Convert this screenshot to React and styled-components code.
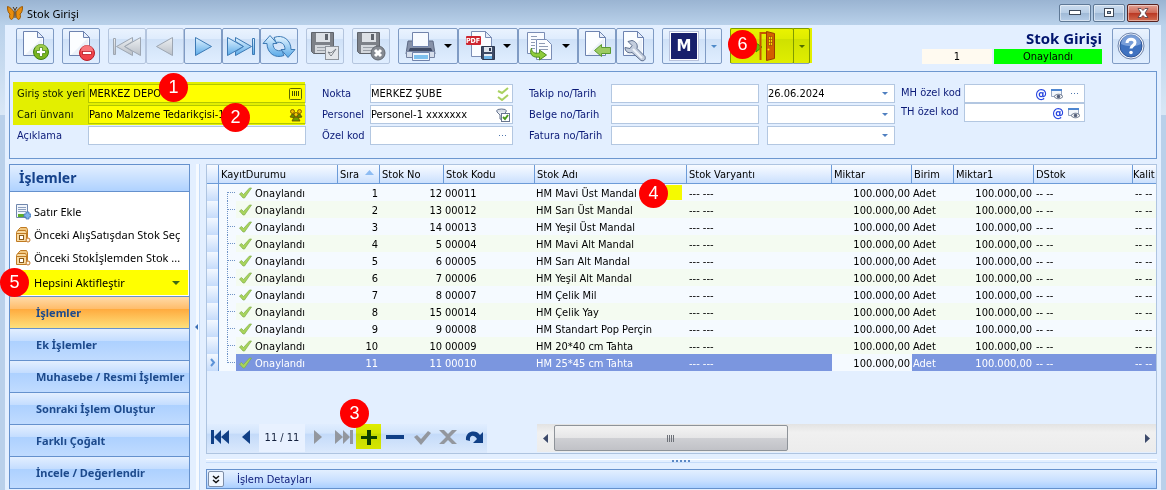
import React, { useId, useState } from 'react';
import styled, { createGlobalStyle, css } from 'styled-components';

const GlobalStyle = createGlobalStyle`
  * {
    box-sizing: border-box;
  }
  html, body, #root {
    height: 100%;
  }
  body {
    margin: 0;
    overflow: hidden;
    font-family: 'DejaVu Sans Condensed', Tahoma, sans-serif;
    font-size: 11px;
    color: #000;
  }
  button, input {
    font: inherit;
    color: inherit;
  }
`;

const Frame = styled.div`
  display: flex;
  flex-direction: column;
  height: 100vh;
  padding: 0 5px;
  background: linear-gradient(#b9d1ea 0, #b9d1ea 25px, #d9e7f6 115px, #b9d0ea 115px);
`;

const TitleBar = styled.header`
  display: flex;
  align-items: center;
  gap: 4px;
  height: 25px;
  flex: none;
  margin: 0 -5px;
  padding: 0 7px;
  background: linear-gradient(#9ab4d2, #b9d1ea);
`;

const WindowTitle = styled.span`
  flex: 1;
  font-family: 'Noto Sans', sans-serif;
  font-size: 11px;
  line-height: 25px;
  padding-top: 2px;
`;

const WindowButtons = styled.div`
  display: flex;
  gap: 2px;
`;

const WindowButton = styled.button`
  display: flex;
  align-items: center;
  justify-content: center;
  width: 32px;
  height: 18px;
  padding: 0;
  border: 1px solid ${(props) => (props.$close ? '#57221f' : '#5f7996')};
  border-radius: 2px;
  background: ${(props) =>
    props.$close
      ? 'linear-gradient(#e2a295, #cf6a57 48%, #b93622 50%, #d26c50)'
      : 'linear-gradient(#cbdcee, #b8cee6 48%, #9fb9d6 50%, #b7cee8)'};
  box-shadow: inset 0 0 0 1px rgba(255, 255, 255, 0.45);
`;

const Body = styled.main`
  display: flex;
  flex-direction: column;
  flex: 1;
  min-height: 0;
  padding: 3px 4px 0;
  background: #e3efff;
`;

const Toolbar = styled.div`
  display: flex;
  gap: 8px;
  height: 36px;
  flex: none;
  padding: 0 7px;
`;

const ButtonGroup = styled.div`
  position: relative;
  display: flex;
`;

const ToolButton = styled.button`
  display: flex;
  align-items: center;
  justify-content: center;
  gap: 8px;
  width: ${(props) => props.$width || 38}px;
  height: 36px;
  padding: 0;
  border: 1px solid #7f9bc4;
  border-radius: 2px;
  background: linear-gradient(#eaf3fe, #dfecfd 28%, #cfe1f7 30%, #e0eeff);
  &:disabled {
    border-color: #b4c5de;
  }
`;

const CaretButton = styled(ToolButton)`
  width: ${(props) => props.$width || 17}px;
  margin-left: -1px;
  border-radius: 0 2px 2px 0;
`;

const DocumentInfo = styled.div`
  display: grid;
  grid-template-columns: 70px 108px;
  grid-template-rows: 21px 15px;
  column-gap: 2px;
  margin-left: auto;
  margin-right: 2px;
  text-align: center;
`;

const DocumentTitle = styled.h1`
  grid-column: 1 / 3;
  margin: 0;
  text-align: right;
  font-family: 'Open Sans', sans-serif;
  font-size: 15px;
  line-height: 21px;
  font-weight: 700;
  color: #00146e;
`;

const InfoCell = styled.span`
  line-height: 16px;
  background: ${(props) => props.$color};
`;

const FormPanel = styled.section`
  display: flex;
  align-items: flex-start;
  flex: none;
  height: 88px;
  margin-top: 7px;
  padding: 12px 8px 0 7px;
  border: 1px solid #6d97cf;
`;

const FieldGroup = styled.div`
  position: relative;
  display: grid;
  grid-template-columns: ${(props) => props.$columns};
  grid-auto-rows: 19px;
  row-gap: ${(props) => (props.$dense ? 0 : 2)}px;
  margin-right: ${(props) => props.$space || 0}px;
  line-height: ${(props) => (props.$dense ? 18 : 20)}px;
`;

const Label = styled.label`
  white-space: nowrap;
  color: #0b1a78;
`;

const FieldBox = styled.span`
  display: flex;
  align-items: center;
  min-width: 0;
  margin-right: ${(props) => props.$space || 0}px;
  padding-right: 1px;
  border: 1px solid #b3c7e1;
  background: #fff;
`;

const TextInput = styled.input`
  flex: 1;
  min-width: 0;
  height: 17px;
  padding: 0;
  border: 0;
  outline: 0;
  background: transparent;
  line-height: 17px;
`;

const IconButton = styled.button`
  display: flex;
  align-items: center;
  justify-content: center;
  width: ${(props) => props.$width || 17}px;
  height: 16px;
  padding: 0;
  border: 0;
  background: none;
  color: #4f76ad;
`;

// yellow marker pen laid over a part of the screen
const Marker = styled.span`
  position: absolute;
  z-index: 1;
  inset: ${(props) => props.$inset || '0'};
  background: #ff0;
  mix-blend-mode: multiply;
  pointer-events: none;
`;

const Badge = styled.span`
  position: absolute;
  z-index: 2;
  left: ${(props) => props.$left}px;
  top: ${(props) => props.$top}px;
  width: 29px;
  height: 29px;
  border-radius: 50%;
  background: #fe0000;
  color: #fff;
  font-family: 'Liberation Sans', sans-serif;
  font-size: 18px;
  line-height: 29px;
  text-align: center;
  pointer-events: none;
`;

const Work = styled.div`
  display: flex;
  flex: 1;
  min-height: 0;
  margin-top: 5px;
`;

const Sidebar = styled.aside`
  display: flex;
  flex-direction: column;
  width: 181px;
  flex: none;
  margin-bottom: 1px;
  border: 1px solid #6591cd;
  background: #fff;
  font-family: 'Noto Sans', sans-serif;
`;

const SidebarTitle = styled.h2`
  height: 27px;
  margin: 0 0 8px;
  padding-left: 9px;
  border-bottom: 1px solid #6591cd;
  background: linear-gradient(#e3efff, #afd2ff);
  color: #15428b;
  font-size: 14px;
  line-height: 26px;
  font-weight: 700;
`;

const Action = styled.button`
  display: flex;
  align-items: center;
  gap: 3px;
  height: 23px;
  padding: 0 5px;
  border: 0;
  background: none;
  line-height: 23px;
  text-align: left;
  white-space: nowrap;
  svg {
    flex: none;
  }
`;

const ActivateRow = styled.div`
  position: relative;
  height: 27px;
  padding: 1px 0;
`;

const ActivateButton = styled.button`
  display: flex;
  align-items: center;
  justify-content: space-between;
  width: calc(100% - 1px);
  height: 25px;
  padding: 0 8px 0 24px;
  border: 0;
  background: #ff0;
`;

const Divider = styled.hr`
  width: 146px;
  height: 1px;
  margin: 0 0 0 25px;
  border: 0;
  background: #6f93c9;
`;

const NavButton = styled.button`
  height: 32px;
  flex: none;
  padding: 0 0 0 26px;
  border: 0;
  border-top: 1px solid #6591cd;
  color: #1d4a8c;
  font-weight: 700;
  line-height: 31px;
  text-align: left;
  white-space: nowrap;
  background: ${(props) =>
    props.$active
      ? 'linear-gradient(#ffdaa8, #ffbd6b 38%, #ffab3f 40%, #fee07b)'
      : 'linear-gradient(#e3efff, #c4ddff 38%, #add1ff 40%, #c0dbff)'};
`;

const SideSplitter = styled.div`
  display: flex;
  align-items: center;
  justify-content: flex-end;
  width: 10px;
  margin-right: 6px;
  flex: none;
  border-right: 1px solid #c4dbf9;
  box-shadow: inset -3px 0 #f6faff;
`;

const GridArea = styled.div`
  display: flex;
  flex-direction: column;
  flex: 1;
  min-width: 0;
  margin-bottom: 1px;
`;

const GridBox = styled.section`
  display: flex;
  flex-direction: column;
  flex: 1;
  min-height: 0;
  border: 1px solid #aec4e0;
`;

const TableArea = styled.div`
  flex: 1;
  min-height: 0;
  overflow: hidden;
`;

const Table = styled.table`
  width: 100%;
  table-layout: fixed;
  border-collapse: separate;
  border-spacing: 0;
`;

const Th = styled.th`
  height: 19px;
  padding: 2px 0 0 2px;
  border-right: 1px solid #6c9bd8;
  border-bottom: 1px solid #6c9bd8;
  background: linear-gradient(#f8fbff, #e2eeff 50%, #cbe0fd);
  font-weight: 400;
  line-height: 16px;
  text-align: left;
  white-space: nowrap;
  &:last-child {
    padding-left: 0;
    border-right: 0;
  }
`;

const SortArrow = styled.svg`
  margin: 0 0 3px 6px;
`;

const Row = styled.tr`
  background: ${(props) => (props.$odd ? '#f5faff' : '#f4fbf1')};
  ${(props) =>
    props.$selected &&
    css`
      background: #7b96df;
      color: #fff;
    `}
`;

const Td = styled.td`
  position: relative;
  height: 17px;
  padding: 2px 2px 0 1px;
  line-height: 15px;
  text-align: ${(props) => (props.$right ? 'right' : 'left')};
  white-space: nowrap;
  ${(props) =>
    props.$editing &&
    css`
      background: #f5faff;
      color: #000;
    `}
`;

const DashCell = styled(Td)`
  padding-left: 2px;
`;

const StatusTd = styled(Td)`
  padding: 0;
`;

const Indicator = styled.td`
  height: 17px;
  padding: 0;
  border-right: 1px solid #6c9bd8;
  background: linear-gradient(#f3f8ff, #c6dcfb);
  line-height: 0;
  text-align: center;
`;

const StatusCell = styled.div`
  display: flex;
  align-items: center;
  height: 17px;
  gap: 3px;
`;

const StatusText = styled.span`
  padding-top: 2px;
`;

const Tree = styled.svg`
  flex: none;
  background: #f5faff;
`;

const Footer = styled.div`
  display: flex;
  height: 29px;
  flex: none;
`;

const Navigator = styled.div`
  position: relative;
  display: flex;
  align-items: flex-start;
  width: 280px;
  flex: none;
  background: linear-gradient(#e0edff, #d3e5fc 32%, #c3daf9 34%, #dbe9fc);
`;

const NavIcon = styled.button`
  display: flex;
  align-items: center;
  justify-content: center;
  width: ${(props) => props.$width || 26}px;
  height: 26px;
  padding: 0;
  border: 0;
  background: none;
  color: #103f86;
  &:disabled {
    color: #93979e;
  }
`;

const Position = styled.span`
  width: 46px;
  line-height: 28px;
  background: #e8f1ff;
  text-align: center;
  color: #14213d;
`;

const ScrollBar = styled.div`
  display: flex;
  align-items: center;
  flex: 1;
  min-width: 0;
  height: 28px;
  margin-left: 50px;
  background: linear-gradient(#e3e3e3, #f0f0f0 30%, #ececec);
`;

const ScrollArrow = styled.button`
  display: flex;
  align-items: center;
  justify-content: center;
  width: 17px;
  height: 26px;
  padding: 0;
  border: 0;
  background: none;
`;

const ScrollTrack = styled.div`
  flex: 1;
`;

const ScrollThumb = styled.div`
  display: flex;
  align-items: center;
  justify-content: center;
  width: 40%;
  height: 26px;
  border: 1px solid #8e9399;
  border-radius: 2px;
  background: linear-gradient(#f4f4f4, #e6e6e7 48%, #cfd0d4 50%, #c1c2c7);
`;

const BottomSplitter = styled.div`
  display: flex;
  align-items: center;
  justify-content: center;
  height: 4px;
  flex: none;
  margin: 5px 0 6px;
  border-top: 1px solid #fff;
  border-bottom: 1px solid #c4dbf9;
`;

const DetailBar = styled.section`
  display: flex;
  align-items: center;
  gap: 13px;
  height: 20px;
  flex: none;
  padding: 0 1px;
  border: 1px solid #6591cd;
  background: linear-gradient(#e3efff, #c8dfff 60%, #a9cfff);
  color: #0b1a78;
`;

const ExpandButton = styled.button`
  display: flex;
  align-items: center;
  justify-content: center;
  width: 16px;
  height: 16px;
  padding: 0;
  border: 1px solid #7d8ea8;
  border-radius: 2px;
  background: #f1f7ff;
`;

function Caret({ color = '#000', size = 8 }) {
  return (
    <svg width={size} height={size / 2} viewBox="0 0 8 4">
      <path d="M0 0h8L4 4z" fill={color} />
    </svg>
  );
}

function Page({ children }) {
  return (
    <svg width="30" height="32" viewBox="0 0 30 32">
      <path d="M3.5 1.5h14l6 6v18h-20z" fill="#fbfdff" stroke="#6d83b0" />
      <path d="M5 25l17-17v17z" fill="#e4ebf6" opacity=".7" />
      <path d="M17.500 1.5v6h6z" fill="#e7eefa" stroke="#6d83b0" />
      {children}
    </svg>
  );
}

function AddPageIcon() {
  return (
    <Page>
      <circle cx="21" cy="22" r="7.5" fill="#79b51c" stroke="#3f7f12" />
      <path d="M15 20a6 6 0 0 1 12 0c-4 2-8 2-12 0z" fill="#b9dc6a" opacity=".6" />
      <path d="M19.5 17.5h3v3h3v3h-3v3h-3v-3h-3v-3h3z" fill="#fff" stroke="#4c8a17" strokeWidth=".8" />
    </Page>
  );
}

function RemovePageIcon() {
  return (
    <Page>
      <circle cx="21" cy="23" r="7.5" fill="#f0444b" stroke="#b81d26" />
      <path d="M15 21a6 6 0 0 1 12 0c-4 2-8 2-12 0z" fill="#ff9a9d" opacity=".6" />
      <rect x="16.5" y="21.5" width="9" height="3" fill="#fff" stroke="#b81d26" strokeWidth=".8" />
    </Page>
  );
}

function ArrowDefs({ id, grey }) {
  return (
    <linearGradient id={id} x1="0" y1="0" x2="0" y2="1">
      <stop offset="0" stopColor={grey ? '#eceff2' : '#e2f3ff'} />
      <stop offset="1" stopColor={grey ? '#b9bfc7' : '#5aaae8'} />
    </linearGradient>
  );
}

function StepIcon({ grey, double, back }) {
  const id = useId();
  const paint = { fill: `url(#${id})`, stroke: grey ? '#9da6b2' : '#3d7ab5' };
  return (
    <svg width="32" height="26" viewBox="0 0 32 26">
      <ArrowDefs id={id} grey={grey} />
      <g transform={back ? 'matrix(-1 0 0 1 32 0)' : undefined}>
        {double ? (
          <>
            <path d="M2.5 4.5l16 9-16 9z" {...paint} />
            <path d="M10.5 4.5l16 9-16 9v-4l8-5-8-5z" {...paint} />
            <path d="M27.5 5.5h2v16h-2z" {...paint} />
          </>
        ) : (
          <path d="M8.5 4.500l16 9-16 9z" {...paint} />
        )}
      </g>
    </svg>
  );
}

function RefreshIcon() {
  const id = useId();
  return (
    <svg width="34" height="28" viewBox="0 0 34 28">
      <ArrowDefs id={id} />
      <g fill={`url(#${id})`} stroke="#3d7ab5" strokeLinejoin="round">
        <path d="M8 3.5l7 8h-4c0 6 4 8 9 7l2 5C13 27 5 21 5 11.5H1z" />
        <path d="M26 25.5l-7-8h4c0-6-4-8-9-7l-2-5C21 2 29 8 29 17.5h4z" />
      </g>
    </svg>
  );
}

function SaveIcon({ cancel }) {
  return (
    <svg width="30" height="30" viewBox="0 0 30 30">
      <path d="M1.5 1.5h22v21h-20l-2-2z" fill="#7d8188" stroke="#5f646c" />
      <rect x="6" y="2" width="14" height="9" fill="#dde1e6" />
      <rect x="15" y="3" width="3" height="6" fill="#5f646c" />
      <rect x="5" y="14" width="15" height="8" fill="#d4d8dd" />
      <path d="M7 16.5h11M7 19.5h11" stroke="#9aa0a8" />
      {cancel ? (
        <>
          <circle cx="22" cy="22" r="7" fill="#858a92" stroke="#62676f" />
          <path d="M19 19l6 6m0-6l-6 6" stroke="#fff" strokeWidth="3" />
        </>
      ) : (
        <>
          <rect x="15.5" y="15.5" width="13" height="13" fill="#e3e6ea" stroke="#8d939b" />
          <path d="M18 21l3 4 5-7-5 4z" fill="#fff" stroke="#777d85" />
        </>
      )}
    </svg>
  );
}

function PrintIcon() {
  return (
    <svg width="31" height="31" viewBox="0 0 31 31">
      <path d="M3 10h25l2 13H1z" fill="#8691a8" stroke="#5d6983" />
      <path d="M5 17h21l2 4H3z" fill="#3f4a64" />
      <path d="M7.5 1.5h16v14h-16z" fill="#f7faff" stroke="#7183ab" />
      <path d="M1.5 20.5h28v6h-28z" fill="#d7dfec" stroke="#7684a2" />
      <path d="M7.5 21.5h17v8h-17z" fill="#eef5fd" stroke="#7183ab" />
      <path d="M9 24h14v4H9z" fill="#7dc0ee" />
    </svg>
  );
}

function PdfIcon() {
  return (
    <svg width="30" height="32" viewBox="0 0 30 32">
      <path d="M6.5 1.5h14l6 6v19h-20z" fill="#fafcff" stroke="#7a8db5" />
      <path d="M20.5 1.5v6h6z" fill="#e4ebf7" stroke="#7a8db5" />
      <rect x="1" y="6" width="15" height="9" rx="1" fill="#cd2530" />
      <text x="8" y="13" fontSize="7" fontWeight="700" fill="#fff" textAnchor="middle" fontFamily="DejaVu Sans Condensed">
        PDF
      </text>
      <path d="M16.5 16.5h13v13h-12l-1-1z" fill="#3d4b66" stroke="#2c3850" />
      <rect x="19" y="17" width="8" height="5" fill="#dfe5ee" />
      <rect x="24" y="18" width="2" height="3" fill="#2c3850" />
      <rect x="19" y="24" width="8" height="5" fill="#e9eef5" />
      <rect x="19" y="26" width="8" height="3" fill="#6db4e8" />
    </svg>
  );
}

function CopyIcon() {
  return (
    <svg width="28" height="31" viewBox="0 0 28 31">
      <path d="M1.5 1.5h17v21h-17z" fill="#fafcff" stroke="#7a8db5" />
      <path d="M5 5.5h6M5 8.5h5M5 11.5h4M5 14.5h4M5 17.5h4" stroke="#8e9bb5" />
      <path d="M10.5 8.5h10l5 5v15h-15z" fill="#fafcff" stroke="#7a8db5" />
      <path d="M13 12.5h6M13 15.5h9M13 18.5h9" stroke="#8e9bb5" />
      <path d="M5.5 17c0 4 3 6 8 5v-3l7 5-7 5v-3c-6 1-11-2-8-9z" fill="#8ecb3a" stroke="#4f8f1e" />
    </svg>
  );
}

function ImportIcon() {
  return (
    <Page>
      <path d="M12.5 20.5l7-6v3h9v6h-9v3z" fill="#9ccb62" stroke="#5a9a2f" />
    </Page>
  );
}

function WrenchIcon() {
  return (
    <Page>
      <path
        d="M8 11.5l4 4-2 3-5-1c0 4 3 6 7 5l9 8c3 1 5-1 4-4l-8-8c1-4-1-7-5-8z"
        fill="#c3cddd"
        stroke="#5c6d8c"
      />
      <path d="M13 19l9 9" stroke="#eff4fb" strokeWidth="2" />
    </Page>
  );
}

function MLogo() {
  return (
    <svg width="30" height="30" viewBox="0 0 30 30">
      <rect x=".5" y=".5" width="29" height="29" fill="#fff" stroke="#b8c2dc" />
      <rect x="2" y="2" width="26" height="26" fill="#18206c" />
      <text x="15" y="20" fontSize="15" fontWeight="700" fill="#fff" textAnchor="middle" fontFamily="DejaVu Sans">
        M
      </text>
    </svg>
  );
}

function DoorIcon() {
  return (
    <svg width="28" height="32" viewBox="0 0 28 32">
      <path d="M8 13l6 4-6 5z" fill="#66b83c" stroke="#3d8a26" />
      <path d="M12.5 30V3h6" fill="none" stroke="#c4561f" strokeWidth="2" />
      <path d="M18.5 1.5l8 2v25l-8 2z" fill="#d35f22" stroke="#9c3c15" />
      <path d="M20.5 6.5h4v9h-4zM20.5 9.5h4M20.5 12.5h4M22.5 6v10" fill="#f3dc9c" stroke="#a8521c" strokeWidth=".8" />
      <circle cx="20.500" cy="19.5" r="1" fill="#fff1a8" />
    </svg>
  );
}

function HelpIcon() {
  return (
    <svg width="30" height="30" viewBox="0 0 30 30">
      <circle cx="15" cy="15" r="13" fill="#f4f7fc" stroke="#6f84aa" />
      <circle cx="15" cy="15" r="11" fill="#3f72c0" stroke="#2d5599" />
      <path d="M5 13a10 10 0 0 1 20 0c-6 3-13 3-20 0z" fill="#9fbde9" opacity=".6" />
      <path d="M11 12c0-5 8-5 8-.5 0 3-4 3-4 6" fill="none" stroke="#fff" strokeWidth="3" />
      <circle cx="15" cy="21.5" r="1.8" fill="#fff" />
    </svg>
  );
}

function ButterflyIcon() {
  return (
    <svg width="16" height="16" viewBox="0 0 16 16">
      <path d="M7 7C5 4 3 2 .5 1.5 .5 5 1 8 3 9c-1 2-.5 5 1.5 5.500C6 14 7 12 7 9z" fill="#e98d0c" stroke="#9a5a08" />
      <path d="M9 7c2-3 4-5 6.500-5.500 0 3.500-.5 6.500-2.500 7.500 1 2 .5 5-1.500 5.500C10 14 9 12 9 9z" fill="#e98d0c" stroke="#9a5a08" />
      <path d="M8 5v8M6 2l2 3 2-3" fill="none" stroke="#4a2c0a" />
    </svg>
  );
}

function BarcodeIcon() {
  return (
    <svg width="13" height="12" viewBox="0 0 13 12">
      <rect x=".5" y=".5" width="12" height="11" rx="1" fill="#fff" stroke="#5b6675" />
      <path d="M3.5 3v5M5.5 3v5M7.5 3v5M9.5 3v5" stroke="#3f4958" />
    </svg>
  );
}

function PeopleIcon() {
  return (
    <svg width="14" height="14" viewBox="0 0 14 14">
      <g stroke="#6d4a16" strokeWidth=".8">
        <path d="M1 9l2-3h3v4zM13 9l-2-3H8v4z" fill="#5e8c2c" />
        <circle cx="3.5" cy="3.5" r="2" fill="#f0bd6a" />
        <circle cx="10.5" cy="3.5" r="2" fill="#f0bd6a" />
        <path d="M3 13l2-4h4l2 4z" fill="#6c9a38" />
        <circle cx="7" cy="6.5" r="2" fill="#f7d08a" />
      </g>
    </svg>
  );
}

function DoubleCheckIcon() {
  return (
    <svg width="12" height="14" viewBox="0 0 12 14">
      <path d="M1 4l4 2 6-5M1 10l4 3 6-5" fill="none" stroke="#a9d160" strokeWidth="2" />
    </svg>
  );
}

function FilterIcon() {
  return (
    <svg width="14" height="14" viewBox="0 0 14 14">
      <ellipse cx="5.5" cy="3" rx="5" ry="2" fill="#d9dfe9" stroke="#67758f" />
      <path d="M1 4l3 3v4l3 1V7l3-3" fill="#e9edf4" stroke="#67758f" />
      <rect x="5.5" y="5.5" width="8" height="8" fill="#fff" stroke="#67758f" />
      <path d="M7 9l2 2 3-4" fill="none" stroke="#4a9a1c" strokeWidth="2" />
    </svg>
  );
}

function DotsIcon() {
  return (
    <svg width="8" height="2" viewBox="0 0 8 2">
      <path d="M0 0h1v1H0zM3 0h1v1H3zM6 0h1v1H6z" fill="currentColor" />
    </svg>
  );
}

function AtIcon() {
  return (
    <svg width="14" height="14" viewBox="0 0 14 14">
      <text x="7" y="11" fontSize="13" fontWeight="700" fill="#2745e0" textAnchor="middle" fontFamily="DejaVu Sans Condensed">
        @
      </text>
    </svg>
  );
}

function PreviewIcon() {
  return (
    <svg width="13" height="12" viewBox="0 0 13 12">
      <path d="M.5 1.5h10v7H.5z" fill="#f3f7fc" stroke="#97a6c0" />
      <path d="M0 1h11v2H0z" fill="#4e86d0" />
      <path d="M3 8.5c2.5-3 6.500-3 9 0-2.500 3-6.500 3-9 0z" fill="#fff" stroke="#66738b" />
      <circle cx="7.5" cy="8.5" r="1.8" fill="#56627c" />
    </svg>
  );
}

function AddRowIcon() {
  return (
    <svg width="16" height="16" viewBox="0 0 16 16">
      <path d="M1.5 .5h11v13h-11z" fill="#f2f6fc" stroke="#6f86ac" />
      <path d="M3 3.5h8M3 5.5h8M3 7.5h8" stroke="#8c9fbf" />
      <path d="M3 10h6v3H3z" fill="#5fae27" />
      <path d="M11 8h3v2h2v3h-2v2h-3v-2H9v-3h2z" fill="#7fb2ea" stroke="#4676b5" strokeWidth=".8" />
    </svg>
  );
}

function BoxIcon() {
  return (
    <svg width="16" height="16" viewBox="0 0 16 16">
      <path d="M3.5 2.5l2-2h6l1 2v8h-9z" fill="#f1c67f" stroke="#bf7a22" />
      <path d="M1.5 5.5l1-2h8l1 2v9h-10z" fill="#f8d9a0" stroke="#bf7a22" />
      <path d="M1.5 6.5h10" stroke="#bf7a22" />
      <rect x="4.5" y="8.5" width="4" height="4" fill="#fff" stroke="#8a5a1a" />
      <circle cx="13" cy="13" r="2" fill="#fff4e0" stroke="#c4772a" />
    </svg>
  );
}

function CheckIcon() {
  return (
    <svg width="13" height="12" viewBox="0 0 13 12">
      <path d="M.5 7l2-1.500 2 2L10.500 1h2L5.500 11H4z" fill="#a8d45c" stroke="#7fae4a" strokeWidth=".7" />
    </svg>
  );
}

function Field({ label, id, value = '', children, space }) {
  return (
    <>
      <Label htmlFor={id}>{label}</Label>
      <FieldBox $space={space}>
        <TextInput id={id} defaultValue={value} />
        {children}
      </FieldBox>
    </>
  );
}

function DateBox({ label, value }) {
  return (
    <FieldBox>
      <TextInput aria-label={label} defaultValue={value} />
      <IconButton aria-label={label}>
        <Caret color="#4f7fc0" size={6} />
      </IconButton>
    </FieldBox>
  );
}

const stocks = [
  [12, '00011', 'HM Mavi Üst Mandal'],
  [13, '00012', 'HM Sarı Üst Mandal'],
  [14, '00013', 'HM Yeşil Üst Mandal'],
  [5, '00004', 'HM Mavi Alt Mandal'],
  [6, '00005', 'HM Sarı Alt Mandal'],
  [7, '00006', 'HM Yeşil Alt Mandal'],
  [8, '00007', 'HM Çelik Mil'],
  [15, '00014', 'HM Çelik Yay'],
  [9, '00008', 'HM Standart Pop Perçin'],
  [10, '00009', 'HM 20*40 cm Tahta'],
  [11, '00010', 'HM 25*45 cm Tahta'],
];

const columns = [
  ['KayıtDurumu', 119],
  ['Sıra', 42],
  ['Stok No', 64],
  ['Stok Kodu', 91],
  ['Stok Adı', 152],
  ['Stok Varyantı', 145],
  ['Miktar', 80],
  ['Birim', 42],
  ['Miktar1', 80],
  ['DStok', 99],
  ['Kalit'],
];

const sections = [
  'İşlemler',
  'Ek İşlemler',
  'Muhasebe / Resmi İşlemler',
  'Sonraki İşlem Oluştur',
  'Farklı Çoğalt',
  'İncele / Değerlendir',
];

function StockTable() {
  const [selected, setSelected] = useState(stocks.length - 1);
  return (
    <Table>
      <colgroup>
        <col width="12" />
        {columns.map(([name, width]) => (
          <col key={name} width={width} />
        ))}
      </colgroup>
      <thead>
        <tr>
          <Th />
          {columns.map(([name]) => (
            <Th key={name}>
              {name}
              {name === 'Sıra' && (
                <SortArrow width="9" height="5" viewBox="0 0 9 5">
                  <path d="M4.5 0L9 5H0z" fill="#8dbcf3" />
                </SortArrow>
              )}
            </Th>
          ))}
        </tr>
      </thead>
      <tbody>
        {stocks.map(([no, code, name], i) => (
          <Row key={code} $odd={i % 2 === 0} $selected={i === selected} onClick={() => setSelected(i)}>
            <Indicator>
              {i === selected && (
                <svg width="6" height="9" viewBox="0 0 6 9">
                  <path d="M1 1l3 3.5L1 8" fill="none" stroke="#5c93d8" strokeWidth="2" />
                </svg>
              )}
            </Indicator>
            <StatusTd>
              <StatusCell>
                <Tree width="17" height="17">
                  <path
                    d={`M8.5 ${i === 0 ? 8 : 0}V${i === stocks.length - 1 ? 9 : 17}M9 8.5h8`}
                    stroke="#6f93c6"
                    strokeDasharray="1 1"
                  />
                </Tree>
                <CheckIcon />
                <StatusText>Onaylandı</StatusText>
              </StatusCell>
            </StatusTd>
            <Td $right>{i + 1}</Td>
            <Td $right>{no}</Td>
            <Td>{code}</Td>
            <Td>
              {name}
              {i === 0 && (
                <>
                  <Marker $inset="1px 5px 1px 131px" />
                  <Badge $left={104} $top={-5}>4</Badge>
                </>
              )}
            </Td>
            <DashCell>--- ---</DashCell>
            <Td $right $editing={i === selected}>100.000,00</Td>
            <Td>Adet</Td>
            <Td $right>100.000,00</Td>
            <DashCell>-- --</DashCell>
            <DashCell>-- --</DashCell>
          </Row>
        ))}
      </tbody>
    </Table>
  );
}

function GridNavigator() {
  return (
    <Navigator>
      <NavIcon aria-label="İlk">
        <svg width="20" height="14" viewBox="0 0 20 14">
          <path d="M1 0h3v14H1zM11 0v14L4 7zM19 0v14l-8-7z" fill="currentColor" />
        </svg>
      </NavIcon>
      <NavIcon aria-label="Önceki">
        <svg width="10" height="14" viewBox="0 0 10 14">
          <path d="M9 0v14L1 7z" fill="currentColor" />
        </svg>
      </NavIcon>
      <Position>11 / 11</Position>
      <NavIcon aria-label="Sonraki" disabled>
        <svg width="9" height="14" viewBox="0 0 9 14">
          <path d="M0 0v14l8-7z" fill="currentColor" />
        </svg>
      </NavIcon>
      <NavIcon aria-label="Son" $width={25} disabled>
        <svg width="20" height="14" viewBox="0 0 20 14">
          <path d="M19 0h-3v14h3zM9 0v14l7-7zM1 0v14l8-7z" fill="currentColor" />
        </svg>
      </NavIcon>
      <ButtonGroup>
        <NavIcon aria-label="Ekle" $width={25}>
          <svg width="17" height="17" viewBox="0 0 17 17">
            <path d="M7 1h4v6h6v3h-6v6H7v-6H1V7h6z" fill="#0d3f50" />
          </svg>
        </NavIcon>
        <Marker $inset="0 0 1px 0" />
        <Badge $left={-16} $top={-25}>3</Badge>
      </ButtonGroup>
      <NavIcon aria-label="Sil" $width={28}>
        <svg width="18" height="4" viewBox="0 0 18 4">
          <path d="M0 0h18v4H0z" fill="currentColor" />
        </svg>
      </NavIcon>
      <NavIcon aria-label="Onayla" disabled>
        <svg width="18" height="15" viewBox="0 0 18 15">
          <path d="M1 7l3-2 4 4 7-8 3 2-10 12z" fill="currentColor" />
        </svg>
      </NavIcon>
      <NavIcon aria-label="Vazgeç" disabled>
        <svg width="18" height="14" viewBox="0 0 18 14">
          <path d="M0 0h5l4 4 4-4h5l-7 7 7 7h-5l-4-4-4 4H0l7-7z" fill="currentColor" />
        </svg>
      </NavIcon>
      <NavIcon aria-label="Yenile">
        <svg width="19" height="13" viewBox="0 0 19 13">
          <path d="M1 9C0 0 11-2 15 4l3-3v11H8l4-4C9 3 4 4 5 10z" fill="currentColor" />
        </svg>
      </NavIcon>
    </Navigator>
  );
}

function App() {
  const [active, setActive] = useState('İşlemler');
  return (
    <Frame>
      <GlobalStyle />
      <TitleBar>
        <ButterflyIcon />
        <WindowTitle>Stok Girişi</WindowTitle>
        <WindowButtons>
          <WindowButton aria-label="Simge durumuna küçült">
            <svg width="12" height="5" viewBox="0 0 12 5">
              <rect x=".5" y=".5" width="11" height="4" fill="#fff" stroke="#3f4b5c" />
            </svg>
          </WindowButton>
          <WindowButton aria-label="Ekranı kapla">
            <svg width="10" height="9" viewBox="0 0 10 9">
              <rect x=".5" y=".5" width="9" height="8" fill="#fff" stroke="#3f4b5c" />
              <rect x="3.5" y="3.5" width="3" height="2" fill="#9fb9d6" stroke="#3f4b5c" />
            </svg>
          </WindowButton>
          <WindowButton $close aria-label="Kapat">
            <svg width="12" height="10" viewBox="0 0 12 10">
              <path d="M1 .5h3l2 2 2-2h3L8 5l3 4.500H8l-2-2-2 2H1L4 5z" fill="#fff" stroke="#4d3b42" strokeWidth=".8" />
            </svg>
          </WindowButton>
        </WindowButtons>
      </TitleBar>

      <Body>
        <Toolbar>
          <ToolButton aria-label="Yeni"><AddPageIcon /></ToolButton>
          <ToolButton aria-label="Sil"><RemovePageIcon /></ToolButton>
          <ButtonGroup>
            <ToolButton aria-label="İlk kayıt" disabled><StepIcon grey double back /></ToolButton>
            <ToolButton aria-label="Önceki kayıt" disabled><StepIcon grey back /></ToolButton>
            <ToolButton aria-label="Sonraki kayıt"><StepIcon /></ToolButton>
            <ToolButton aria-label="Son kayıt"><StepIcon double /></ToolButton>
            <ToolButton aria-label="Yenile"><RefreshIcon /></ToolButton>
          </ButtonGroup>
          <ToolButton aria-label="Kaydet" disabled><SaveIcon /></ToolButton>
          <ToolButton aria-label="Vazgeç" disabled><SaveIcon cancel /></ToolButton>
          <ButtonGroup>
            <ToolButton $width={60} aria-label="Yazdır"><PrintIcon /><Caret /></ToolButton>
            <ToolButton $width={60} aria-label="PDF kaydet"><PdfIcon /><Caret /></ToolButton>
            <ToolButton $width={60} aria-label="Kopyala"><CopyIcon /><Caret /></ToolButton>
            <ToolButton aria-label="İçeri al"><ImportIcon /></ToolButton>
            <ToolButton aria-label="Ayarlar"><WrenchIcon /></ToolButton>
          </ButtonGroup>
          <ButtonGroup>
            <ToolButton $width={44} aria-label="M"><MLogo /></ToolButton>
            <CaretButton aria-label="M seçenekleri"><Caret color="#4f8ac9" size={6} /></CaretButton>
          </ButtonGroup>
          <ButtonGroup>
            <ToolButton $width={64} aria-label="Çıkış"><DoorIcon /></ToolButton>
            <CaretButton aria-label="Çıkış seçenekleri"><Caret color="#4f6a99" size={6} /></CaretButton>
            <Marker $inset="0 -2px 1px 0" />
            <Badge $left={-2} $top={2}>6</Badge>
          </ButtonGroup>
          <DocumentInfo>
            <DocumentTitle>Stok Girişi</DocumentTitle>
            <InfoCell $color="#fffaf0">1</InfoCell>
            <InfoCell $color="#00ff00">Onaylandı</InfoCell>
          </DocumentInfo>
          <ToolButton aria-label="Yardım"><HelpIcon /></ToolButton>
        </Toolbar>

        <FormPanel>
          <FieldGroup $columns="71px 218px" $space={16}>
            <Field id="stokYeri" label="Giriş stok yeri" value="MERKEZ DEPO">
              <IconButton aria-label="Stok yeri seç"><BarcodeIcon /></IconButton>
            </Field>
            <Field id="cari" label="Cari ünvanı" value="Pano Malzeme Tedarikçisi-1">
              <IconButton aria-label="Cari seç"><PeopleIcon /></IconButton>
            </Field>
            <Field id="aciklama" label="Açıklama" />
            <Marker $inset="-2px 1px 20px -4px" />
            <Badge $left={142} $top={-11}>1</Badge>
            <Badge $left={204} $top={19}>2</Badge>
          </FieldGroup>
          <FieldGroup $columns="48px 143px" $space={16}>
            <Field id="nokta" label="Nokta" value="MERKEZ ŞUBE">
              <IconButton aria-label="Nokta seç"><DoubleCheckIcon /></IconButton>
            </Field>
            <Field id="personel" label="Personel" value="Personel-1 xxxxxxx">
              <IconButton aria-label="Personel seç"><FilterIcon /></IconButton>
            </Field>
            <Field id="ozelKod" label="Özel kod">
              <IconButton aria-label="Özel kod seç"><DotsIcon /></IconButton>
            </Field>
          </FieldGroup>
          <FieldGroup $columns="82px 156px 128px" $space={6}>
            <Field id="takip" label="Takip no/Tarih" space={8} />
            <DateBox label="Takip tarihi" value="26.06.2024" />
            <Field id="belge" label="Belge no/Tarih" space={8} />
            <DateBox label="Belge tarihi" />
            <Field id="fatura" label="Fatura no/Tarih" space={8} />
            <DateBox label="Fatura tarihi" />
          </FieldGroup>
          <FieldGroup $columns="63px 121px" $dense>
            <Field id="mh" label="MH özel kod">
              <IconButton aria-label="MH adres"><AtIcon /></IconButton>
              <IconButton aria-label="MH önizle"><PreviewIcon /></IconButton>
              <IconButton aria-label="MH seç"><DotsIcon /></IconButton>
            </Field>
            <Field id="th" label="TH özel kod">
              <IconButton aria-label="TH adres"><AtIcon /></IconButton>
              <IconButton aria-label="TH önizle"><PreviewIcon /></IconButton>
            </Field>
          </FieldGroup>
        </FormPanel>

        <Work>
          <Sidebar>
            <SidebarTitle>İşlemler</SidebarTitle>
            <Action><AddRowIcon />Satır Ekle</Action>
            <Action><BoxIcon />Önceki AlışSatışdan Stok Seç</Action>
            <Action><BoxIcon />Önceki Stokİşlemden Stok ...</Action>
            <Divider />
            <ActivateRow>
              <ActivateButton>
                Hepsini Aktifleştir
                <Caret color="#3d6b14" />
              </ActivateButton>
              <Badge $left={-10} $top={-1}>5</Badge>
            </ActivateRow>
            {sections.map((name) => (
              <NavButton key={name} $active={name === active} onClick={() => setActive(name)}>
                {name}
              </NavButton>
            ))}
          </Sidebar>
          <SideSplitter>
            <svg width="4" height="6" viewBox="0 0 4 6">
              <path d="M3 0v6L0 3z" fill="#3c6fb5" />
            </svg>
          </SideSplitter>
          <GridArea>
            <GridBox>
              <TableArea>
                <StockTable />
              </TableArea>
              <Footer>
                <GridNavigator />
                <ScrollBar>
                  <ScrollArrow aria-label="Sola kaydır">
                    <svg width="5" height="9" viewBox="0 0 5 9">
                      <path d="M5 0v9L0 4.500z" fill="#3c4a6b" />
                    </svg>
                  </ScrollArrow>
                  <ScrollTrack>
                    <ScrollThumb>
                      <svg width="8" height="7" viewBox="0 0 8 7">
                        <path d="M.5 0v7M2.5 0v7M4.5 0v7M6.5 0v7" stroke="#6d7178" />
                      </svg>
                    </ScrollThumb>
                  </ScrollTrack>
                  <ScrollArrow aria-label="Sağa kaydır">
                    <svg width="5" height="9" viewBox="0 0 5 9">
                      <path d="M0 0v9l5-4.500z" fill="#3c4a6b" />
                    </svg>
                  </ScrollArrow>
                </ScrollBar>
              </Footer>
            </GridBox>
            <BottomSplitter>
              <svg width="19" height="2" viewBox="0 0 19 2">
                <path d="M0 1h19" stroke="#5b88c4" strokeWidth="2" strokeDasharray="2 2" />
              </svg>
            </BottomSplitter>
            <DetailBar>
              <ExpandButton aria-label="İşlem detaylarını aç">
                <svg width="8" height="9" viewBox="0 0 8 9">
                  <path d="M1 1l3 2.500L7 1M1 5l3 2.500L7 5" fill="none" stroke="#111" strokeWidth="1.500" />
                </svg>
              </ExpandButton>
              İşlem Detayları
            </DetailBar>
          </GridArea>
        </Work>
      </Body>
    </Frame>
  );
}

export default App;
